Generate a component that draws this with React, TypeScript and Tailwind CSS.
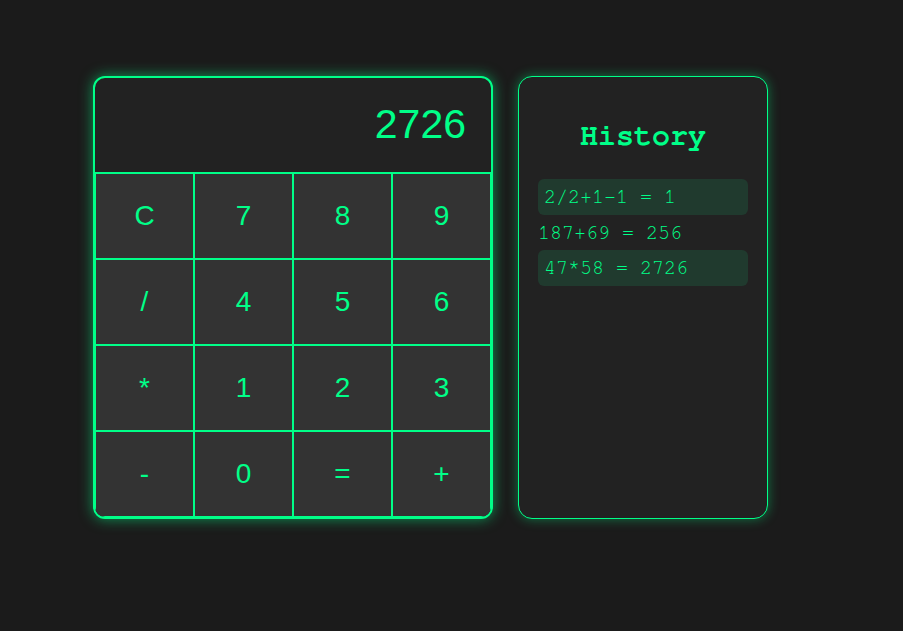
import { useState } from "react";

const keys = ["C", "7", "8", "9", "/", "4", "5", "6", "*", "1", "2", "3", "-", "0", "=", "+"];

export default function App() {
  const [display, setDisplay] = useState("2726");
  const [history] = useState(["2/2+1-1 = 1", "187+69 = 256", "47*58 = 2726"]);

  const press = (k: string) => {
    if (k === "C") setDisplay("");
    else if (k !== "=") setDisplay((d) => d + k);
  };

  return (
    <div className="min-h-[631px] w-full bg-[#1b1b1b] pl-[93px] pt-[76px]">
      <div className="flex items-start gap-[25px]">
        <div
          className="w-[400px] overflow-hidden rounded-[12px] border-2 border-[#00ff88] bg-[#222222] shadow-[0_0_14px_rgba(0,255,136,0.55)]"
          style={{ fontFamily: '"Liberation Sans", Arial, sans-serif' }}
        >
          <div className="flex h-[95px] items-center justify-end border-b border-[#00ff88] pr-[25px] text-[41px] text-[#00ff88]">
            {display}
          </div>
          <div className="grid grid-cols-4">
            {keys.map((k) => (
              <button
                key={k}
                onClick={() => press(k)}
                className="flex h-[86px] items-center justify-center border border-[#00ff88] bg-[#333333] pb-[1px] text-[28px] text-[#00ff88]"
              >
                {k}
              </button>
            ))}
          </div>
        </div>

        <div
          className="h-[443px] w-[250px] rounded-[14px] border border-[#00ff88] bg-[#222222] px-[19px] pt-[20px] shadow-[0_0_12px_rgba(0,255,136,0.4)]"
          style={{ fontFamily: '"Nimbus Mono PS", "Nimbus Mono L", FreeMono, Courier, "Liberation Mono", monospace' }}
        >
          <h2 className="mt-[21px] mb-[25px] text-center text-[30px] leading-[36px] font-bold text-[#00ff88]">History</h2>
          <div className="flex flex-col gap-[5.5px]">
            {history.map((h, i) => (
              <div
                key={h}
                className={`text-[20px] leading-[24px] text-[#00ff88] ${
                  i % 2 === 0 ? "rounded-[6px] bg-[#203a2e] px-[6px] py-[6px]" : ""
                }`}
              >
                {h}
              </div>
            ))}
          </div>
        </div>
      </div>
    </div>
  );
}
